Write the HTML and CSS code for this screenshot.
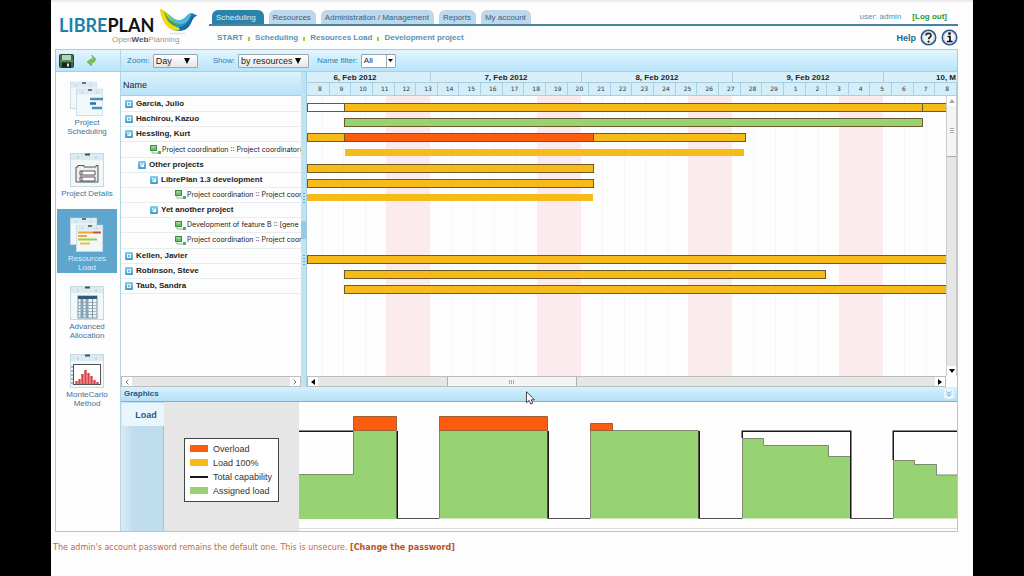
FILE: index.html
```html
<!DOCTYPE html>
<html lang="en">
<head>
<meta charset="utf-8">
<title>LibrePlan - Resources Load</title>
<link rel="stylesheet" href="styles.css">
</head>
<body>
<svg class="defs" width="0" height="0" aria-hidden="true">
  <defs>
    <linearGradient id="tgl" x1="0" y1="0" x2="0" y2="1"><stop offset="0" stop-color="#8accea"/><stop offset="1" stop-color="#3f9bc9"/></linearGradient>
    <linearGradient id="wing" x1="0" y1="0" x2="1" y2="0.4"><stop offset="0" stop-color="#f6d400"/><stop offset=".35" stop-color="#a8cf2a"/><stop offset=".65" stop-color="#2fa9c4"/><stop offset="1" stop-color="#1b6fb0"/></linearGradient>
    <symbol id="closed" viewBox="0 0 8 8"><rect width="8" height="8" rx="1" fill="url(#tgl)"/><rect x="2" y="2" width="4" height="4" fill="#e8f6fc"/><path d="M3.3 2.4 5.3 4 3.3 5.6z" fill="#3f9bc9"/></symbol>
    <symbol id="open" viewBox="0 0 8 8"><rect width="8" height="8" rx="1" fill="url(#tgl)"/><path d="M6 2v4H2z" fill="#fff"/><path d="M2 2h3L2 5z" fill="#c9e8f6"/></symbol>
    <symbol id="task" viewBox="0 0 12 9"><rect x=".5" y=".5" width="6" height="5" fill="#6dbd6a" stroke="#3f8f48"/><path d="M1.5 2h4" stroke="#c5e8c0"/><path d="M2 6v2h6" fill="none" stroke="#8bb58b"/><rect x="8" y="6" width="3" height="3" fill="#57ad5c"/></symbol>
    <symbol id="sheet" viewBox="0 0 34 35"><rect x=".5" y="1.500" width="33" height="33" fill="#f2f7f9" stroke="#c3d9e4"/><path d="M1 8V2h32v6z" fill="#dcebf2"/><path d="M15 2.500h5" stroke="#41525c" stroke-width="2"/><path d="M8 4.500v2M26 4.500v2" stroke="#9db7c4"/></symbol>
  </defs>
</svg>
<div class="page">
  <header class="top">
    <a class="logo" href="#" aria-label="LibrePlan">
      <span class="words"><span class="brand"><span class="libre">LIBRE</span>PLAN</span><span class="tagline">Open<b>Web</b>Planning</span></span>
      <svg class="bird" width="39" height="27" viewBox="0 0 39 27"><ellipse cx="19" cy="24.500" rx="9" ry="1" fill="#e6e6e6"/><path d="M1 0C6 1 9 5 13 8.500C17 12 21 12 25 9.500C28 7.500 29 4 33 4L38 6.500C34 8 33.500 11 31.500 15C29 20 24 22.500 18 22C8 21 3 11 1 0z" fill="url(#wing)"/><path d="M1 0C5 3 7 9 11 13C14 16.500 18 19 23 19.500C20 22 15 22 11 19.500C5 15.500 2 8 1 0z" fill="#f7d80a"/><path d="M5 3C9 9 13 15 21 16C17 18.500 12 16 9 12C7 9 6 6 5 3z" fill="#3f9e58"/><path d="M8 4C13 8 17 13 24 11C29 9 29 4 33 4C30 8 30 14 23 15C16 15.500 12 9 8 4z" fill="#56b7dc"/><path d="M20 18C28 17 30 11 33 6L38 6.500C34 8 33.500 11 31.500 15C29 19.500 25 21.500 21 21.500z" fill="#1d69ab"/></svg>
    </a>
    <div class="heading">
      <div class="navline">
        <nav class="tabs">
          <a class="current" href="#">Scheduling</a><a href="#">Resources</a><a href="#">Administration / Management</a><a href="#">Reports</a><a href="#">My account</a>
        </nav>
        <div class="session"><span>user: admin</span><a href="#">[Log out]</a></div>
      </div>
      <div class="crumbline">
        <nav class="crumbs"><a href="#">START</a><i></i><a href="#">Scheduling</a><i></i><a href="#">Resources Load</a><i></i><a href="#">Development project</a></nav>
        <div class="help"><a href="#">Help</a>
          <button aria-label="Help"><svg width="17" height="17" viewBox="0 0 17 17"><circle cx="8.500" cy="8.500" r="7.200" fill="#f4f7fc" stroke="#2f5585" stroke-width="1.600"/><circle cx="8.500" cy="8.500" r="5.800" fill="none" stroke="#b9c9e2"/><path d="M6 6.600C6 3.600 11 3.600 11 6.400C11 8.400 8.600 8.200 8.600 10.300" fill="none" stroke="#222" stroke-width="1.700"/><circle cx="8.600" cy="12.600" r="1.100" fill="#222"/></svg></button>
          <button aria-label="About"><svg width="17" height="17" viewBox="0 0 17 17"><circle cx="8.500" cy="8.500" r="7.200" fill="#f4f7fc" stroke="#2f5585" stroke-width="1.600"/><circle cx="8.500" cy="8.500" r="5.800" fill="none" stroke="#b9c9e2"/><circle cx="8.500" cy="4.600" r="1.400" fill="#111"/><path d="M6.500 7.500h2.500v5M6 12.500h5.500" fill="none" stroke="#111" stroke-width="1.700"/></svg></button>
        </div>
      </div>
    </div>
  </header>

  <main class="app">
    <div class="toolbar">
      <div class="actions">
        <button aria-label="Save"><svg width="15" height="14" viewBox="0 0 15 14"><rect x=".5" y=".5" width="14" height="13" rx="1" fill="#3f6b4a" stroke="#2b4a35"/><rect x="3" y="1" width="9" height="5" fill="#b7d3bb"/><path d="M1 7h13" stroke="#77a97d"/><rect x="3" y="8.500" width="9" height="5" fill="#16241b"/><rect x="8" y="9.500" width="2" height="3" fill="#dfe8e0"/></svg></button>
        <button aria-label="Undo"><svg width="9" height="11" viewBox="0 0 9 11"><path d="M4.500 0 8.500 3.500C8.500 7 6 8 4.500 8V11L0 7 4.500 3.500V5.500C6 5.500 6.500 3 4.500 0z" fill="#7cbf4a" stroke="#5a9f35" stroke-width=".5"/></svg></button>
      </div>
      <div class="filters">
        <label for="zoom">Zoom:</label>
        <span class="pick zoom"><select id="zoom"><option>Day</option></select><svg width="6" height="6" viewBox="0 0 6 6"><path d="M0 0h6L3 6z"/></svg></span>
        <label for="show">Show:</label>
        <span class="pick show"><select id="show"><option>by resources</option></select><svg width="6" height="6" viewBox="0 0 6 6"><path d="M0 0h6L3 6z"/></svg></span>
        <label for="filter">Name filter:</label>
        <span class="combo"><input id="filter" value="All"><button aria-label="Open list"><svg width="5" height="3" viewBox="0 0 5 3"><path d="M0 0h5L2.500 3z"/></svg></button></span>
      </div>
    </div>

    <div class="work">
      <nav class="views">
        <a href="#"><svg width="34" height="35" viewBox="0 0 34 35"><g transform="scale(.8)"><use href="#sheet" width="34" height="35"/></g><g transform="translate(6 7) scale(.8)"><use href="#sheet" width="34" height="35"/></g><path d="M20 18h13" stroke="#4a8fb8" stroke-width="2.500"/><path d="M20 22.500h6" stroke="#2f6f9c" stroke-width="2.500"/><path d="M22 27h10" stroke="#4a8fb8" stroke-width="2.500"/></svg>Project<br>Scheduling</a>
        <a class="single" href="#"><svg width="34" height="35" viewBox="0 0 34 35"><use href="#sheet" width="34" height="35"/><path d="M8 15v-1.500h6V15h12v-1.500h2V30H6V15z" fill="#eee" stroke="#555"/><path d="M10 19h15v4H10zM10 25h15v4H10z" fill="#fff" stroke="#555"/><path d="M12 19v4M12 25v4" stroke="#555"/></svg>Project Details</a>
        <a class="current" href="#"><svg width="34" height="35" viewBox="0 0 34 35"><g transform="scale(.8)"><use href="#sheet" width="34" height="35"/></g><g transform="translate(6 7) scale(.8)"><use href="#sheet" width="34" height="35"/></g><path d="M8 15.500h15M8 19h9" stroke="#f0a23a" stroke-width="2"/><path d="M23 15.500h8" stroke="#dd4b2c" stroke-width="2"/><path d="M8 22.500h19" stroke="#9bc94a" stroke-width="2"/><path d="M10 26.500h10" stroke="#eac33a" stroke-width="2"/></svg>Resources<br>Load</a>
        <a href="#"><svg width="34" height="35" viewBox="0 0 34 35"><use href="#sheet" width="34" height="35"/><rect x="8" y="11" width="19" height="22" fill="#eef3f6" stroke="#8093a0"/><path d="M8 12.500h19" stroke="#335a72" stroke-width="3"/><path d="M12 14v19M17 14v19" stroke="#7ba7c3" stroke-width="3"/><path d="M8 17.500h19M8 20.500h19M8 23.500h19M8 26.500h19M8 29.500h19" stroke="#90a3b0" stroke-width=".8"/><path d="M22.500 14v19" stroke="#8093a0"/></svg>Advanced<br>Allocation</a>
        <a href="#"><svg width="34" height="35" viewBox="0 0 34 35"><use href="#sheet" width="34" height="35"/><rect x="3.500" y="11.500" width="27" height="20" fill="#fff" stroke="#555"/><path d="M1 14h2M1 18h2M1 22h2M1 26h2M1 30h2" stroke="#777"/><path d="M6.500 31v-3M9.500 31v-5M12.500 31v-10M15.500 31v-14M18.500 31v-11M21.500 31v-8M24.500 31v-4M27.500 31v-2" stroke="#dc4247" stroke-width="2.400"/></svg>MonteCarlo<br>Method</a>
      </nav>

      <div class="content">
        <div class="planner">
          <section class="resources">
            <h2>Name</h2>
            <ul class="rows">
              <li><svg width="8" height="8"><use href="#closed"/></svg><b>Garcia, Julio</b></li>
              <li><svg width="8" height="8"><use href="#closed"/></svg><b>Hachirou, Kazuo</b></li>
              <li><svg width="8" height="8"><use href="#open"/></svg><b>Hessling, Kurt</b></li>
              <li class="leaf in2"><svg width="12" height="9"><use href="#task"/></svg>Project coordination :: Project coordinator(</li>
              <li class="in1"><svg width="8" height="8"><use href="#open"/></svg><b>Other projects</b></li>
              <li class="in2"><svg width="8" height="8"><use href="#open"/></svg><b>LibrePlan 1.3 development</b></li>
              <li class="leaf in4"><svg width="12" height="9"><use href="#task"/></svg>Project coordination :: Project coor</li>
              <li class="in2"><svg width="8" height="8"><use href="#open"/></svg><b>Yet another project</b></li>
              <li class="leaf in4"><svg width="12" height="9"><use href="#task"/></svg>Development of feature B :: [gene</li>
              <li class="leaf in4"><svg width="12" height="9"><use href="#task"/></svg>Project coordination :: Project coor</li>
              <li><svg width="8" height="8"><use href="#closed"/></svg><b>Kellen, Javier</b></li>
              <li><svg width="8" height="8"><use href="#closed"/></svg><b>Robinson, Steve</b></li>
              <li><svg width="8" height="8"><use href="#closed"/></svg><b>Taub, Sandra</b></li>
            </ul>
            <div class="hscroll"><button aria-label="Scroll left"><svg width="4" height="6" viewBox="0 0 4 6"><path d="M3.500.5 1 3l2.500 2.500" fill="none" stroke="#777"/></svg></button><button aria-label="Scroll right"><svg width="4" height="6" viewBox="0 0 4 6"><path d="M.5.500 3 3 .5 5.500" fill="none" stroke="#777"/></svg></button></div>
          </section>

          <div class="splitter"><i class="grip"></i><i class="knob"></i><i class="grip"></i></div>

          <section class="timeline">
            <div class="weeks"><span>6, Feb 2012</span><span>7, Feb 2012</span><span>8, Feb 2012</span><span>9, Feb 2012</span><span>10, M</span></div>
            <div class="days"><span>8</span><span>9</span><span>10</span><span>11</span><span>12</span><span>13</span><span>14</span><span>15</span><span>16</span><span>17</span><span>18</span><span>19</span><span>20</span><span>21</span><span>22</span><span>23</span><span>24</span><span>25</span><span>26</span><span>27</span><span>28</span><span>29</span><span>1</span><span>2</span><span>3</span><span>4</span><span>5</span><span>6</span><span>7</span><span>8</span></div>
            <div class="field">
              <div class="canvas">
                <div class="rows bars">
                  <div><i class="bar free" style="width:38px"></i><i class="bar full" style="width:579px"></i><i class="bar full" style="width:60px"></i></div>
                  <div><i class="bar ok" style="margin-left:37px;width:579px"></i></div>
                  <div><i class="bar full" style="width:38px"></i><i class="bar over" style="width:250px"></i><i class="bar full" style="width:153px"></i></div>
                  <div><i class="bar thin" style="margin-left:38px;width:399px"></i></div>
                  <div><i class="bar full" style="width:287px"></i></div>
                  <div><i class="bar full" style="width:287px"></i></div>
                  <div><i class="bar thin" style="width:286px"></i></div>
                  <div></div>
                  <div></div>
                  <div></div>
                  <div><i class="bar full" style="width:680px"></i></div>
                  <div><i class="bar full" style="margin-left:37px;width:482px"></i></div>
                  <div><i class="bar full" style="margin-left:37px;width:640px"></i></div>
                </div>
              </div>
              <div class="vscroll"><button aria-label="Scroll up"><svg width="6" height="4" viewBox="0 0 6 4"><path d="M0 4h6L3 0z" fill="#aaa"/></svg></button><i class="thumb"></i><button aria-label="Scroll down"><svg width="6" height="4" viewBox="0 0 6 4"><path d="M0 0h6L3 4z"/></svg></button></div>
            </div>
            <div class="hscroll"><button aria-label="Scroll left"><svg width="4" height="6" viewBox="0 0 4 6"><path d="M4 0v6L0 3z"/></svg></button><i class="thumb"></i><button aria-label="Scroll right"><svg width="4" height="6" viewBox="0 0 4 6"><path d="M0 0v6l4-3z"/></svg></button></div>
          </section>
        </div>

        <section class="graphics">
          <div class="bar-title"><h2>Graphics</h2><button aria-label="Collapse"><svg width="6" height="6" viewBox="0 0 6 6"><path d="M.5.500 3 2.500 5.500.5M.5 3 3 5l2.500-2" fill="none" stroke="#6ba3c2"/></svg></button></div>
          <div class="panel">
            <div class="side"><button class="tab">Load</button></div>
            <div class="legendbox">
              <ul class="legend">
                <li><i class="over"></i>Overload</li>
                <li><i class="full"></i>Load 100%</li>
                <li><i class="line"></i>Total capability</li>
                <li><i class="ok"></i>Assigned load</li>
              </ul>
            </div>
            <div class="chart">
              <svg width="659" height="126" viewBox="299 402 659 126" role="img" aria-label="Load chart">
                <g fill="#98d373" stroke="#7d8a72">
                  <path stroke="none" d="M299 475h54v-44h44v88h-98z"/><path fill="none" d="M299 474.500h54.500V431"/>
                  <path d="M439.500 518.500v-88h108v88" /><path d="M590.500 518.500v-88h108v88"/>
                  <path d="M742.500 518.500v-80h21v7h65v11h22v62"/>
                  <path d="M893.500 518.500v-58h21v4h22v10.500h23v43.500"/>
                </g>
                <g fill="none" stroke="#1c1618" stroke-width="1.500">
                  <path d="M299 431.250h54M397.250 431v87.500M548.250 431v87.500M699.250 431v87.500M742.250 438v-6.750h108.500v87.250M893.250 460v-28.750H958"/>
                </g>
                <path d="M397 518.500h42M548 518.500h42M699 518.500h43M850 518.500h43" stroke="#55504f"/>
                <g fill="#fb5c0f" stroke="#a06032"><path d="M353.500 416.500h43v14h-43zM439.500 416.500h108v14h-108zM590.500 423.500h22v7h-22z"/></g>
              </svg>
            </div>
          </div>
        </section>
      </div>
    </div>
  </main>

  <p class="warning">The admin's account password remains the default one. This is unsecure. <a href="#">[Change the password]</a></p>
</div>
<svg class="pointer" width="9" height="14" viewBox="0 0 9 14"><path d="M.5.700v11l2.600-2.300L4.800 13l1.900-.8L5.200 8.800h3.200z" fill="#fff" stroke="#444"/></svg>
</body>
</html>
```

FILE: styles.css
```css
* { box-sizing: border-box; }
body {
  margin: 0;
  min-height: 100vh;
  padding: 0 51px;
  background: #000;
  font-family: "Liberation Sans", Arial, sans-serif;
  font-size: 8px;
  line-height: 10px;
  color: #222;
}
a { color: inherit; text-decoration: none; }
h2, ul, p { margin: 0; padding: 0; }
ul { list-style: none; }
button { padding: 0; border: 0; background: none; font: inherit; color: inherit; display: grid; place-items: center; }
svg { display: block; flex: none; }
.defs { position: absolute; }

.page {
  min-height: 100vh;
  background: #fdfdfd;
  border-top: 2px solid #ececec;
}

/* header */
.top { display: flex; gap: 12px; padding: 0 15px 0 8px; height: 47px; }
.logo { display: flex; width: 138px; padding-top: 7px; }
.words { display: flex; flex-direction: column; width: 98px; padding-top: 7px; white-space: nowrap; }
.brand { font: 700 18px/18px Lato, sans-serif; color: #111; }
.libre { color: #1d80ab; }
.tagline { padding: 1px 0 0 53px; font-size: 8px; line-height: 10px; color: #999; }
.tagline b { color: #555; }
.bird { margin-left: 2px; }
.heading { flex: 1; min-width: 0; }
.navline {
  display: flex;
  align-items: flex-end;
  justify-content: space-between;
  height: 24px;
  border-bottom: 2px solid #4583a1;
}
.tabs { display: flex; gap: 5px; padding-left: 3px; }
.tabs a {
  padding: 2px 5px 0 4px;
  height: 14px;
  line-height: 12px;
  border-radius: 6px 6px 0 0;
  background: #bfd7e8;
  color: #38607f;
}
.tabs .current { padding-right: 8px; background: #2b83ab; color: #d9f0fa; }
.session { display: flex; gap: 11px; align-self: center; padding: 8px 11px 0 0; color: #4e93b8; }
.session a { color: #2c9a2c; font-weight: bold; }
.crumbline { display: flex; justify-content: space-between; align-items: center; height: 23px; }
.crumbs { display: flex; align-items: center; gap: 5px; padding-left: 8px; font-weight: bold; color: #5b93b4; }
.crumbs i { width: 2px; height: 4px; margin-top: 3px; background: #a9c64a; }
.help { display: flex; align-items: center; gap: 4px; font-size: 9px; font-weight: bold; color: #1f6a98; }

/* application frame */
.app { margin: 0 15px 0 4px; border: 1px solid #a9cbdc; }
.toolbar { display: flex; height: 22px; background: linear-gradient(#e2f5fe, #b8e4fa); border-bottom: 1px solid #a5cfe2; }
.actions { display: flex; align-items: center; gap: 13px; width: 65px; padding-left: 3px; border-right: 1px solid #b1d5e5; }
.filters { display: flex; align-items: center; gap: 3px; padding-left: 6px; color: #2f7fae; }
.pick { display: grid; grid-template-columns: 1fr 14px; align-items: center; margin-right: 12px; }
.pick select { grid-area: 1 / 1 / 2 / 3; }
.pick svg { grid-area: 1 / 2; pointer-events: none; }
.pick select, .combo {
  height: 14px;
  width: 100%;
  border: 1px solid #9aa7ae;
  border-radius: 1px;
  background: linear-gradient(#fff, #e6e6e6);
}
.pick select { appearance: none; padding: 0 2px; font: inherit; font-size: 9px; color: #222; }
.zoom { width: 45px; }
.show { width: 71px; margin-right: 5px; }
.combo { display: flex; width: 35px; background: #fff; }
.combo input { width: 24px; min-width: 0; border: 0; padding: 0 2px; font: inherit; color: #222; background: none; }
.combo button { flex: 1; border-left: 1px solid #9aa7ae; }

.work { display: flex; }
.views { width: 65px; padding: 1px 3px 0 1px; border-right: 1px solid #b1d5e5; display: flex; flex-direction: column; gap: 4px; }
.views a { display: flex; flex-direction: column; align-items: center; height: 64px; padding-top: 8px; text-align: center; line-height: 9px; color: #44749a; }
.views a svg { margin-bottom: 2px; }
.views .single { height: 55px; margin: 3px 0 6px; }
.views .current { background: #5fa6cf; color: #d9effa; }
.content { flex: 1; min-width: 0; }

/* planner */
.planner { display: grid; grid-template-columns: 180px 6px 1fr; height: 315px; }
.resources { display: flex; flex-direction: column; min-width: 0; }
.resources h2 { height: 24px; padding: 0 2px; font-size: 9px; line-height: 26px; font-weight: normal; color: #222; background: linear-gradient(#dcf3fd, #b9e2f6); border-bottom: 1px solid #a5cfe2; }
.rows { display: grid; grid-template-rows: repeat(13, 1fr); height: 197px; margin-top: 1px; }
.resources .rows { margin-bottom: auto; }
.rows li { display: flex; align-items: center; gap: 3px; min-width: 0; padding-left: 4px; overflow: hidden; white-space: nowrap; border-bottom: 1px solid #e8edf0; }
.rows .leaf { gap: 0; font-family: Inter, "Liberation Sans", sans-serif; font-size: 7px; }
.rows .in1 { padding-left: 17px; }
.rows .in2 { padding-left: 29px; }
.rows .in4 { padding-left: 54px; }
.splitter { display: flex; flex-direction: column; align-items: center; justify-content: center; gap: 16px; background: #bfe3f2; border-right: 1px solid #a5cfe2; }
.grip { width: 2px; height: 12px; background: repeating-linear-gradient(#6f9fb7 0 1px, #bfe3f2 1px 3px); }
.knob { width: 5px; height: 18px; background: #93cbe4; }

.timeline { display: flex; flex-direction: column; min-width: 0; }
.weeks { display: flex; height: 11px; overflow: hidden; background: #d8eff9; font-weight: bold; line-height: 11px; color: #222; border-bottom: 1px solid #a9cfe0; }
.weeks span { flex: 0 0 151px; text-align: center; border-right: 1px solid #a9cfe0; }
.weeks span:first-child { margin-left: -27px; }
.weeks span:last-child { flex: 1 0 0; padding-left: 52px; text-align: left; border: 0; }
.days { display: grid; grid-template-columns: repeat(30, 1fr); height: 13px; padding-left: 1px; background: #d3edf9; font-family: "DejaVu Sans", sans-serif; font-size: 6px; line-height: 12px; color: #333; border-bottom: 1px solid #a9cfe0; }
.days span { padding-left: 3px; text-align: center; border-right: 1px solid #a9cfe0; }
.field { display: flex; flex: 1; min-height: 0; }
.canvas {
  flex: 1;
  min-width: 0;
  overflow: hidden;
  background: repeating-linear-gradient(90deg, #fdfdfd 0 21px, #f5f5f5 21px 22px, #fdfdfd 22px 43px, #f5f5f5 43px 44px, #fdfdfd 44px 64px, #f5f5f5 64px 65px, #fdfdfd 65px 86px, #f5f5f5 86px 87px, #fdfdfd 87px 107px, #fbebec 107px 151px) -28px 0 / 906px 100% no-repeat;
}
.bars > div { display: flex; align-items: flex-end; }
.bar { flex: none; height: 9px; border: 1px solid #6b5a2a; }
.bar + .bar { margin-left: -1px; }
.free { background: #fff; }
.full { background: #f6bb18; }
.ok { background: #98d373; }
.over { background: #fb5c0f; }
.bar.thin { height: 7px; margin-bottom: 2px; border: 0; background: #f6bb18; }

.hscroll { display: flex; height: 11px; background: #e6e6e4; border: 1px solid #b9bdbd; }
.hscroll button { width: 10px; background: #fff; }
.hscroll button:last-child { margin-left: auto; }
.timeline .hscroll { margin-right: 11px; }
.hscroll .thumb { width: 130px; margin-left: 129px; background: repeating-linear-gradient(90deg, #aaa 0 1px, #f4f4f4 1px 2px) center / 6px 4px no-repeat #f4f4f4; border: solid #b0b0b0; border-width: 0 1px; }
.vscroll { display: flex; flex-direction: column; width: 11px; background: #e6e6e4; border: solid #c9cdcd; border-width: 0 1px; }
.vscroll button { height: 10px; width: 9px; background: #fff; }
.vscroll button:last-child { margin-top: auto; }
.vscroll .thumb { height: 51px; border-bottom: 1px solid #aaa; background: repeating-linear-gradient(#aaa 0 1px, #f4f4f4 1px 2px) center / 4px 6px no-repeat #f4f4f4; }

/* graphics */
.bar-title { display: flex; justify-content: space-between; align-items: center; height: 15px; padding: 0 3px; background: linear-gradient(#d6f1fe, #b5e0f7); border-bottom: 1px solid #7fb0c6; color: #27578a; }
.bar-title h2 { font-size: 8px; line-height: 12px; }
.bar-title button { width: 10px; height: 10px; background: #e3f5fd; border-radius: 2px; }
.panel { display: flex; height: 129px; }
.side { width: 43px; padding: 1px 0 0 1px; background: linear-gradient(90deg, #d9ebf6, #c0dcef 30%, #c0dcef); border-right: 1px solid #a5c3d3; }
.tab { width: 42px; height: 23px; padding-left: 6px; border-radius: 3px 0 0 3px; background: #eaf6fd; font-size: 9px; font-weight: bold; color: #27578a; }
.legendbox { display: grid; place-items: center; width: 135px; background: #e6e6e6; }
.legend { display: grid; grid-template-rows: repeat(4, 14px); align-items: center; width: 95px; padding: 3px 0 3px 5px; margin-top: 6px; border: 1px solid #444; background: #fff; font-size: 9px; color: #333; }
.legend li { display: flex; align-items: center; gap: 5px; white-space: nowrap; }
.legend i { width: 18px; height: 7px; }
.legend .line { height: 2px; background: #1c1618; }
.chart { flex: 1; min-width: 0; overflow: hidden; }
.chart::after { content: ""; display: block; border-top: 1px solid #d5dfe0; }

.warning { padding: 11px 2px; font-family: "DejaVu Sans", sans-serif; color: #c06a45; }
.warning a { font-weight: bold; color: #b8532a; }
.pointer { position: absolute; left: 526px; top: 391px; }
```
